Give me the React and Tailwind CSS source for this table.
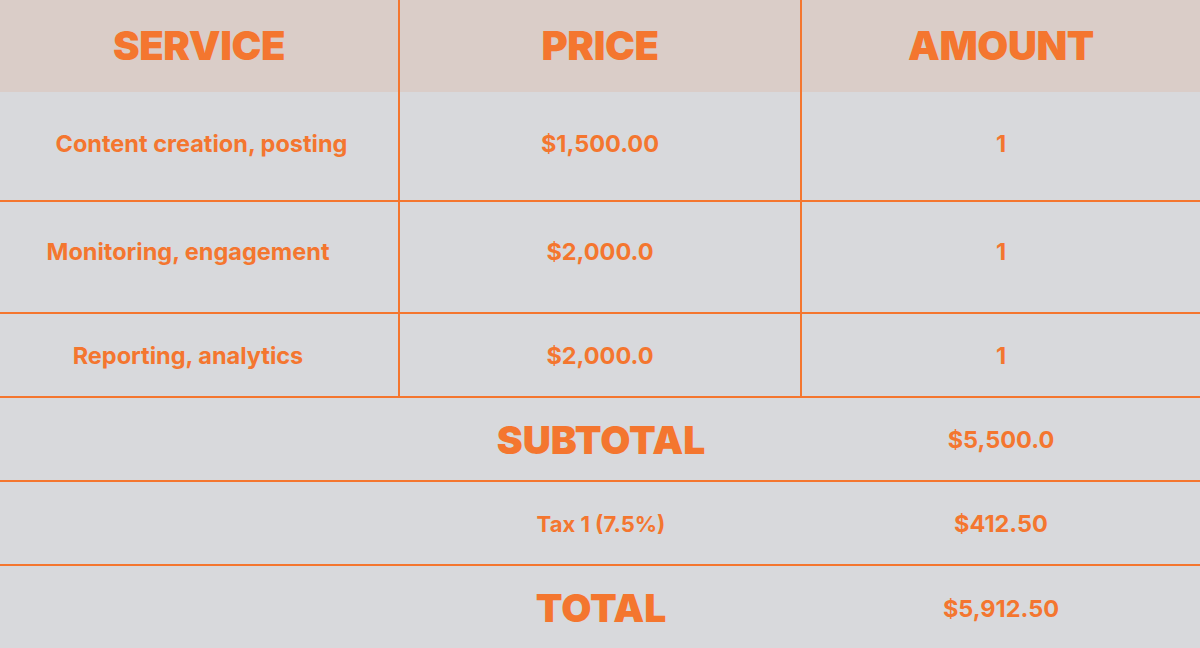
const rows = [
  { service: 'Content creation, posting', price: '$1,500.00', amount: '1', h: 'h-[110px]', pad: 'pb-[4px]', svc: 'pl-[5px]' },
  { service: 'Monitoring, engagement', price: '$2,000.0', amount: '1', h: 'h-[112px]', pad: 'pb-[10px]', svc: 'pr-[22px]' },
  { service: 'Reporting, analytics', price: '$2,000.0', amount: '1', h: 'h-[84px]', pad: 'pt-[2px]', svc: 'pr-[22px]' },
]

export default function App() {
  return (
    <div className="w-[1200px] h-[648px] bg-[#d8d9dc] text-[#f4762f] overflow-hidden" style={{ fontFamily: 'Inter, "Liberation Sans", sans-serif' }}>
      <div className="flex h-[92px] bg-[#dacdc8] text-[40px] font-black tracking-[-0.01em]">
        <div className="w-[400px] border-r-2 border-[#f4762f] flex items-center justify-center">SERVICE</div>
        <div className="w-[402px] border-r-2 border-[#f4762f] flex items-center justify-center">PRICE</div>
        <div className="flex-1 flex items-center justify-center">AMOUNT</div>
      </div>

      {rows.map((r) => (
        <div key={r.service} className={`flex border-b-2 border-[#f4762f] text-[23.5px] font-bold ${r.h}`}>
          <div className={`w-[400px] border-r-2 border-[#f4762f] flex items-center justify-center ${r.pad} ${r.svc}`}>{r.service}</div>
          <div className={`w-[402px] border-r-2 border-[#f4762f] flex items-center justify-center ${r.pad}`}>{r.price}</div>
          <div className={`flex-1 flex items-center justify-center ${r.pad}`}>{r.amount}</div>
        </div>
      ))}

      <div className="flex h-[84px] border-b-2 border-[#f4762f] items-center pt-[2px]">
        <div className="w-[400px]" />
        <div className="w-[402px] text-center text-[39px] font-black">SUBTOTAL</div>
        <div className="flex-1 text-center text-[23.5px] font-bold">$5,500.0</div>
      </div>
      <div className="flex h-[84px] border-b-2 border-[#f4762f] items-center pt-[2px]">
        <div className="w-[400px]" />
        <div className="w-[402px] text-center text-[22px] font-bold">Tax 1 (7.5%)</div>
        <div className="flex-1 text-center text-[23.5px] font-bold">$412.50</div>
      </div>
      <div className="flex h-[82px] items-center pt-[3px]">
        <div className="w-[400px]" />
        <div className="w-[402px] text-center text-[39px] font-black">TOTAL</div>
        <div className="flex-1 text-center text-[23.5px] font-bold">$5,912.50</div>
      </div>
    </div>
  )
}
